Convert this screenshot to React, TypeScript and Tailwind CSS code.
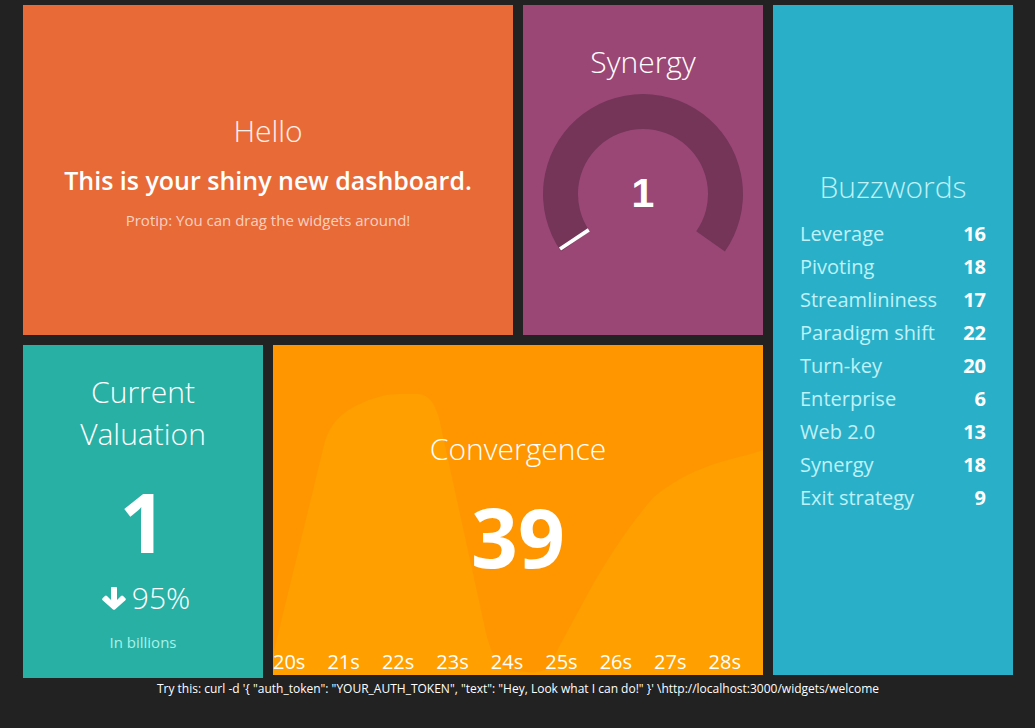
import type { ReactNode } from "react";

const buzzwords = [
  { label: "Leverage", value: 16 },
  { label: "Pivoting", value: 18 },
  { label: "Streamlininess", value: 17 },
  { label: "Paradigm shift", value: 22 },
  { label: "Turn-key", value: 20 },
  { label: "Enterprise", value: 6 },
  { label: "Web 2.0", value: 13 },
  { label: "Synergy", value: 18 },
  { label: "Exit strategy", value: 9 },
];

const ticks = ["20s", "21s", "22s", "23s", "24s", "25s", "26s", "27s", "28s"];

function Title({ children, className = "text-white" }: { children: ReactNode; className?: string }) {
  return <h1 className={`text-[30px] leading-[42px] font-light ${className}`}>{children}</h1>;
}

function ArrowDown() {
  return (
    <svg viewBox="0 0 24 23" className="h-[23px] w-6" fill="currentColor" aria-hidden="true">
      <path d="M10.2 0h3.6c.8 0 1.2.4 1.2 1.2v11.8l4-3.9c.7-.7 1.4-.7 2.1 0l2.3 2.2c.6.6.6 1.4 0 2L13 22.4c-.6.6-1.4.6-2 0L.6 13.3c-.6-.6-.6-1.4 0-2l2.3-2.2c.7-.7 1.4-.7 2.1 0l4 3.9V1.2C9 .4 9.4 0 10.2 0Z" />
    </svg>
  );
}

function WelcomeWidget() {
  return (
    <li className="col-span-2 flex flex-col items-center justify-center bg-[#e86a37] px-3 text-center">
      <Title className="text-white/90">Hello</Title>
      <h3 className="my-3 text-[25px] leading-[32px] font-semibold">This is your shiny new dashboard.</h3>
      <p className="pt-[2px] text-[15px] leading-[20px] text-white/70">Protip: You can drag the widgets around!</p>
    </li>
  );
}

function SynergyWidget() {
  return (
    <li className="flex flex-col items-center justify-center bg-[#9a4775] px-3 pb-[5px] text-center">
      <Title>Synergy</Title>
      <div className="mt-[11px] grid place-items-center">
        <svg viewBox="0 0 200 200" className="col-start-1 row-start-1 size-[200px]" aria-hidden="true">
          <path
            d="M18.1 157.4A100 100 0 1 1 181.9 157.4L153.2 137.3A65 65 0 1 0 46.8 137.3Z"
            fill="#743559"
          />
          <path d="M17 155L45.8 135.9" stroke="#fff" strokeWidth="3.8" />
        </svg>
        <output className="col-start-1 row-start-1 pb-[2px] font-['Liberation_Sans',Arial,sans-serif] text-[41px] leading-[48px] font-bold">
          1
        </output>
      </div>
    </li>
  );
}

function BuzzwordsWidget() {
  return (
    <li className="row-span-2 flex flex-col justify-center bg-[#29b0c8] px-[27px] pb-[2px]">
      <Title className="mb-3 text-center text-[#bff1f8]">Buzzwords</Title>
      <ol>
        {buzzwords.map(({ label, value }) => (
          <li key={label} className="flex justify-between text-[20px] leading-[28px] not-last:mb-[5px]">
            <span className="text-[#bff1f8]">{label}</span>
            <span className="font-bold">{value}</span>
          </li>
        ))}
      </ol>
    </li>
  );
}

function ValuationWidget() {
  return (
    <li className="flex flex-col items-center self-start bg-[#29b0a5] px-3 pt-[26px] pb-[25px] text-center">
      <Title>Current Valuation</Title>
      <h2 className="mt-[10px] text-[82px] leading-[112px] font-bold">1</h2>
      <p className="flex items-center gap-[6px] pl-[6px] text-[30px] leading-[42px] font-light">
        <ArrowDown />
        95%
      </p>
      <p className="mt-3 text-[15px] leading-[22px] text-[#a5f3ea]">In billions</p>
    </li>
  );
}

function ConvergenceWidget() {
  return (
    <li className="relative col-span-2 flex flex-col items-center justify-center bg-[#ff9600] px-3 text-center">
      <svg
        viewBox="0 0 490 330"
        preserveAspectRatio="none"
        className="absolute inset-0 size-full"
        aria-hidden="true"
      >
        <path
          d="M0 310L51 100C58 72 78 59 113 50Q120 49 128 49H145C155 49 162 58 166 73L213 288C217 304 223 321 238 325C250 327 260 329 272 325C278 319 282 310 287 300L318 243C333 216 355 182 379 154C391 142 414 129 433 122C450 115 470 112 490 105V330H0Z"
          fill="#ff9f00"
        />
      </svg>
      <div className="relative">
        <Title>Convergence</Title>
        <h2 className="mt-[10px] text-[82px] leading-[112px] font-bold">39</h2>
      </div>
      <div className="absolute inset-x-0 bottom-0 grid grid-cols-9 text-left text-[20px] leading-[27px]">
        {ticks.map((tick) => (
          <span key={tick}>{tick}</span>
        ))}
      </div>
    </li>
  );
}

export default function App() {
  return (
    <main className="min-h-screen bg-[#222222] pt-[5px] pr-[22px] pl-[23px] font-['Open_Sans','Noto_Sans',sans-serif] text-white">
      <ul className="grid auto-rows-[330px] grid-cols-4 gap-[10px]">
        <WelcomeWidget />
        <SynergyWidget />
        <BuzzwordsWidget />
        <ValuationWidget />
        <ConvergenceWidget />
      </ul>
      <p className="pt-[5px] text-center text-[12px] leading-[18px]">
        {`Try this: curl -d '{ "auth_token": "YOUR_AUTH_TOKEN", "text": "Hey, Look what I can do!" }' \\http://localhost:3000/widgets/welcome`}
      </p>
    </main>
  );
}
